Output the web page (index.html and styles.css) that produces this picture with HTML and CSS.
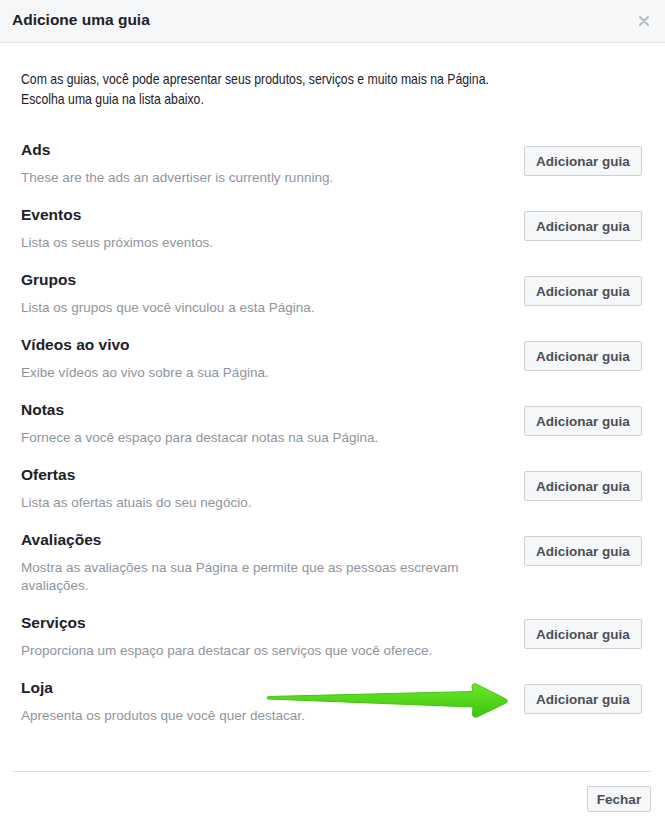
FILE: index.html
```html
<!DOCTYPE html>
<html lang="pt">
<head>
<meta charset="utf-8">
<title>Adicione uma guia</title>
<link rel="stylesheet" href="styles.css">
</head>
<body>
<div class="dialog">
  <div class="header">
    <span class="title">Adicione uma guia</span>
    <svg class="close" width="10" height="10" viewBox="0 0 10 10"><path d="M1 1L9 9M9 1L1 9" stroke="#b4b7bd" stroke-width="1.8" stroke-linecap="round"/></svg>
  </div>
  <div class="body">
    <p class="intro">Com as guias, você pode apresentar seus produtos, serviços e muito mais na Página.<br>Escolha uma guia na lista abaixo.</p>
    <div class="list">
      <div class="row"><div class="text"><div class="name">Ads</div><div class="desc">These are the ads an advertiser is currently running.</div></div><button class="btn">Adicionar guia</button></div>
      <div class="row"><div class="text"><div class="name">Eventos</div><div class="desc">Lista os seus próximos eventos.</div></div><button class="btn">Adicionar guia</button></div>
      <div class="row"><div class="text"><div class="name">Grupos</div><div class="desc">Lista os grupos que você vinculou a esta Página.</div></div><button class="btn">Adicionar guia</button></div>
      <div class="row"><div class="text"><div class="name">Vídeos ao vivo</div><div class="desc">Exibe vídeos ao vivo sobre a sua Página.</div></div><button class="btn">Adicionar guia</button></div>
      <div class="row"><div class="text"><div class="name">Notas</div><div class="desc">Fornece a você espaço para destacar notas na sua Página.</div></div><button class="btn">Adicionar guia</button></div>
      <div class="row"><div class="text"><div class="name">Ofertas</div><div class="desc">Lista as ofertas atuais do seu negócio.</div></div><button class="btn">Adicionar guia</button></div>
      <div class="row"><div class="text"><div class="name">Avaliações</div><div class="desc">Mostra as avaliações na sua Página e permite que as pessoas escrevam avaliações.</div></div><button class="btn">Adicionar guia</button></div>
      <div class="row"><div class="text"><div class="name">Serviços</div><div class="desc">Proporciona um espaço para destacar os serviços que você oferece.</div></div><button class="btn">Adicionar guia</button></div>
      <div class="row"><div class="text"><div class="name">Loja</div><div class="desc">Apresenta os produtos que você quer destacar.</div></div><button class="btn">Adicionar guia</button></div>
    </div>
  </div>
  <div class="footer">
    <button class="btn btn-small">Fechar</button>
  </div>
  <svg class="arrow" width="665" height="825" viewBox="0 0 665 825">
    <defs>
      <linearGradient id="g" x1="0" y1="0" x2="0" y2="1">
        <stop offset="0" stop-color="#6ae82a"/>
        <stop offset="1" stop-color="#3cc40e"/>
      </linearGradient>
    </defs>
    <path d="M268 696.5 L473 691.5 L472 687 Q472 683 476 684 L506 699 Q509 701 506 703 L477 717 Q472 718 472.5 713 L473 707 L268 699 Q266 697.8 268 696.5 Z" fill="url(#g)" stroke="#44c414" stroke-width="1" stroke-linejoin="round"/>
  </svg>
</div>
</body>
</html>
```

FILE: styles.css
```css
* { box-sizing: border-box; }
html, body { margin: 0; padding: 0; background: #fff; }
body { font-family: "Liberation Sans", Arial, Helvetica, sans-serif; color: #1d2129; }
.dialog { position: relative; width: 665px; height: 825px; background: #fff; }
.header {
  height: 43px;
  background: #f6f7f9;
  border-bottom: 1px solid #e2e3e6;
  display: flex;
  align-items: center;
  justify-content: space-between;
  padding: 0 16px 0 12px;
}
.title { font-size: 15.5px; font-weight: bold; color: #1d2129; line-height: 20px; margin-top: -3px; }
.close { display: block; margin-top: -1px; }
.body { padding: 26px 23px 0 21px; }
.intro {
  margin: 0 0 22px;
  font-family: "Liberation Sans Narrow", "Liberation Sans", Arial, sans-serif;
  font-size: 15px;
  line-height: 20px;
  color: #1d2129;
  white-space: nowrap;
  transform: scaleX(0.818);
  transform-origin: left center;
}
.list { display: flex; flex-direction: column; }
.row { display: flex; align-items: flex-start; padding: 9px 0; }
.text { flex: 1; margin-right: 22px; }
.name { font-size: 15.5px; font-weight: bold; line-height: 20px; color: #1d2129; }
.desc { margin-top: 9px; font-size: 13.5px; line-height: 18px; color: #90949c; }
.btn {
  margin-top: 6px;
  width: 118px;
  height: 30px;
  padding: 0;
  background: #f6f7f9;
  border: 1px solid #ced0d4;
  border-radius: 2px;
  font-family: "Liberation Sans", Arial, Helvetica, sans-serif;
  font-size: 13.5px;
  font-weight: bold;
  color: #4b4f56;
  flex-shrink: 0;
}
.footer {
  margin: 37px 14px 0 12px;
  border-top: 1px solid #dddfe2;
  padding-top: 14px;
  display: flex;
  justify-content: flex-end;
}
.btn-small { margin-top: 0; width: 64px; height: 26px; }
.arrow { position: absolute; left: 0; top: 0; pointer-events: none; }
```
